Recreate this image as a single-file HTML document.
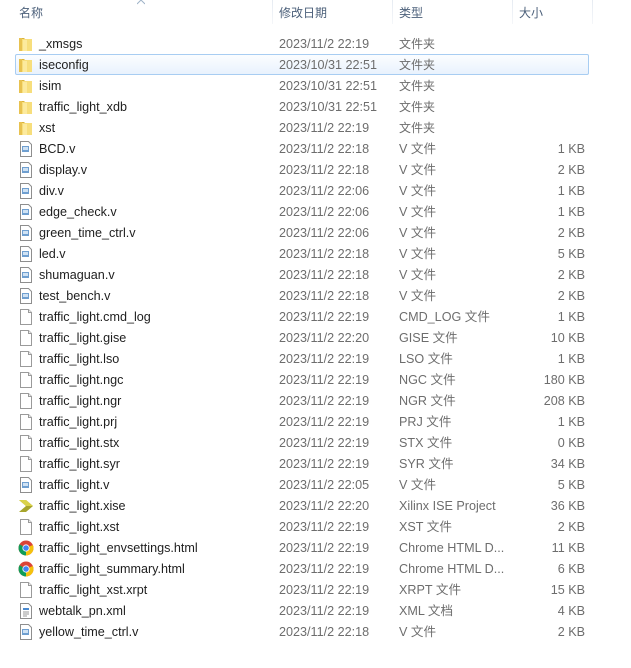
<!DOCTYPE html>
<html><head><meta charset="utf-8"><style>
*{margin:0;padding:0;box-sizing:border-box}
body{width:631px;height:668px;background:#fff;font-family:"Liberation Sans","Noto Sans CJK SC",sans-serif;font-size:12.6px;position:relative;overflow:hidden}
.hd{position:absolute;top:0;left:0;width:631px;height:25px;background:#fff}
.hd span{position:absolute;top:6px;line-height:14px;color:#4c607a;font-size:12px}
.sep{position:absolute;top:0;width:1px;height:24px;background:linear-gradient(#e6ebf2,#f4f6f9)}
.row{position:absolute;left:0;width:631px;height:21px}
.row span{line-height:15px;height:15px;top:4px;position:absolute;white-space:nowrap}
.row .n{left:39px;color:#1e1e1e}
.row .d{left:279px;color:#6d6d6d}
.row .t{left:399px;color:#6d6d6d}
.row .s{right:46px;color:#6d6d6d}
.c{font-size:12px}
.row svg{position:absolute;left:18px;top:3px}
.sel{position:absolute;left:15px;top:54px;width:574px;height:21px;border:1px solid #a8cdf2;border-radius:2px;background:linear-gradient(#fbfdff,#e9f2fd)}
</style></head><body>
<svg width="0" height="0" style="position:absolute">
<defs>
<symbol id="fo" viewBox="0 0 16 16"><path d="M1 2h5l1 1h7v12H1z" fill="#d9b23c"/><path d="M3 3h11v12H3z" fill="#f7de7c"/><path d="M1 2h3v13H1z" fill="#e8c250"/><path d="M5 4h4v11H5z" fill="#fff2b5" opacity=".6"/></symbol>
<symbol id="vf" viewBox="0 0 16 16"><path d="M2.5 .5h8l3 3v12h-11z" fill="#fff" stroke="#8e8e8e"/><rect x="4" y="5" width="7" height="6" fill="#6f9fd0"/><rect x="5" y="6" width="5" height="3" fill="#cfe2f4"/></symbol>
<symbol id="bf" viewBox="0 0 16 16"><path d="M2.5 .5h8l3 3v12h-11z" fill="#fff" stroke="#9a9a9a"/><path d="M10.5 .5v3h3" fill="#eee" stroke="#9a9a9a"/></symbol>
<symbol id="xf" viewBox="0 0 16 16"><path d="M2.5 .5h8l3 3v12h-11z" fill="#fff" stroke="#8e8e8e"/><rect x="5" y="5" width="6" height="2" fill="#4b8ad0"/><path d="M5 9h6M5 11h6M5 13h4" stroke="#999"/></symbol>
<symbol id="xi" viewBox="0 0 16 16"><path d="M1 2h7l7 6-7 6H1l7-6z" fill="#a7a52c"/><path d="M1 2h7l7 6H8z" fill="#dad24a"/></symbol>
<symbol id="ch" viewBox="0 0 16 16"><circle cx="8" cy="8" r="7.5" fill="#db4437"/><path d="M8 8L1.5 4.3A7.5 7.5 0 0 0 8 15.5z" fill="#0f9d58"/><path d="M8 8v7.5A7.5 7.5 0 0 0 14.9 5z" fill="#f4c20d"/><circle cx="8" cy="8" r="3.6" fill="#fff"/><circle cx="8" cy="8" r="2.8" fill="#4285f4"/></symbol>
</defs></svg>
<div class="hd">
<span style="left:19px">名称</span><span style="left:279px">修改日期</span><span style="left:399px">类型</span><span style="left:519px">大小</span>
<svg style="position:absolute;left:137px;top:0" width="8" height="5"><path d="M0 4L4 0L8 4" fill="none" stroke="#9fb3c8"/></svg>
<div class="sep" style="left:272px"></div><div class="sep" style="left:392px"></div><div class="sep" style="left:512px"></div><div class="sep" style="left:592px"></div>
</div>
<div class="sel"></div>
<div class="row" style="top:33px"><svg width="16" height="16"><use href="#fo"/></svg><span class="n">_xmsgs</span><span class="d">2023/11/2 22:19</span><span class="t c">文件夹</span></div>
<div class="row" style="top:54px"><svg width="16" height="16"><use href="#fo"/></svg><span class="n">iseconfig</span><span class="d">2023/10/31 22:51</span><span class="t c">文件夹</span></div>
<div class="row" style="top:75px"><svg width="16" height="16"><use href="#fo"/></svg><span class="n">isim</span><span class="d">2023/10/31 22:51</span><span class="t c">文件夹</span></div>
<div class="row" style="top:96px"><svg width="16" height="16"><use href="#fo"/></svg><span class="n">traffic_light_xdb</span><span class="d">2023/10/31 22:51</span><span class="t c">文件夹</span></div>
<div class="row" style="top:117px"><svg width="16" height="16"><use href="#fo"/></svg><span class="n">xst</span><span class="d">2023/11/2 22:19</span><span class="t c">文件夹</span></div>
<div class="row" style="top:138px"><svg width="16" height="16"><use href="#vf"/></svg><span class="n">BCD.v</span><span class="d">2023/11/2 22:18</span><span class="t">V 文件</span><span class="s">1 KB</span></div>
<div class="row" style="top:159px"><svg width="16" height="16"><use href="#vf"/></svg><span class="n">display.v</span><span class="d">2023/11/2 22:18</span><span class="t">V 文件</span><span class="s">2 KB</span></div>
<div class="row" style="top:180px"><svg width="16" height="16"><use href="#vf"/></svg><span class="n">div.v</span><span class="d">2023/11/2 22:06</span><span class="t">V 文件</span><span class="s">1 KB</span></div>
<div class="row" style="top:201px"><svg width="16" height="16"><use href="#vf"/></svg><span class="n">edge_check.v</span><span class="d">2023/11/2 22:06</span><span class="t">V 文件</span><span class="s">1 KB</span></div>
<div class="row" style="top:222px"><svg width="16" height="16"><use href="#vf"/></svg><span class="n">green_time_ctrl.v</span><span class="d">2023/11/2 22:06</span><span class="t">V 文件</span><span class="s">2 KB</span></div>
<div class="row" style="top:243px"><svg width="16" height="16"><use href="#vf"/></svg><span class="n">led.v</span><span class="d">2023/11/2 22:18</span><span class="t">V 文件</span><span class="s">5 KB</span></div>
<div class="row" style="top:264px"><svg width="16" height="16"><use href="#vf"/></svg><span class="n">shumaguan.v</span><span class="d">2023/11/2 22:18</span><span class="t">V 文件</span><span class="s">2 KB</span></div>
<div class="row" style="top:285px"><svg width="16" height="16"><use href="#vf"/></svg><span class="n">test_bench.v</span><span class="d">2023/11/2 22:18</span><span class="t">V 文件</span><span class="s">2 KB</span></div>
<div class="row" style="top:306px"><svg width="16" height="16"><use href="#bf"/></svg><span class="n">traffic_light.cmd_log</span><span class="d">2023/11/2 22:19</span><span class="t">CMD_LOG 文件</span><span class="s">1 KB</span></div>
<div class="row" style="top:327px"><svg width="16" height="16"><use href="#bf"/></svg><span class="n">traffic_light.gise</span><span class="d">2023/11/2 22:20</span><span class="t">GISE 文件</span><span class="s">10 KB</span></div>
<div class="row" style="top:348px"><svg width="16" height="16"><use href="#bf"/></svg><span class="n">traffic_light.lso</span><span class="d">2023/11/2 22:19</span><span class="t">LSO 文件</span><span class="s">1 KB</span></div>
<div class="row" style="top:369px"><svg width="16" height="16"><use href="#bf"/></svg><span class="n">traffic_light.ngc</span><span class="d">2023/11/2 22:19</span><span class="t">NGC 文件</span><span class="s">180 KB</span></div>
<div class="row" style="top:390px"><svg width="16" height="16"><use href="#bf"/></svg><span class="n">traffic_light.ngr</span><span class="d">2023/11/2 22:19</span><span class="t">NGR 文件</span><span class="s">208 KB</span></div>
<div class="row" style="top:411px"><svg width="16" height="16"><use href="#bf"/></svg><span class="n">traffic_light.prj</span><span class="d">2023/11/2 22:19</span><span class="t">PRJ 文件</span><span class="s">1 KB</span></div>
<div class="row" style="top:432px"><svg width="16" height="16"><use href="#bf"/></svg><span class="n">traffic_light.stx</span><span class="d">2023/11/2 22:19</span><span class="t">STX 文件</span><span class="s">0 KB</span></div>
<div class="row" style="top:453px"><svg width="16" height="16"><use href="#bf"/></svg><span class="n">traffic_light.syr</span><span class="d">2023/11/2 22:19</span><span class="t">SYR 文件</span><span class="s">34 KB</span></div>
<div class="row" style="top:474px"><svg width="16" height="16"><use href="#vf"/></svg><span class="n">traffic_light.v</span><span class="d">2023/11/2 22:05</span><span class="t">V 文件</span><span class="s">5 KB</span></div>
<div class="row" style="top:495px"><svg width="16" height="16"><use href="#xi"/></svg><span class="n">traffic_light.xise</span><span class="d">2023/11/2 22:20</span><span class="t">Xilinx ISE Project</span><span class="s">36 KB</span></div>
<div class="row" style="top:516px"><svg width="16" height="16"><use href="#bf"/></svg><span class="n">traffic_light.xst</span><span class="d">2023/11/2 22:19</span><span class="t">XST 文件</span><span class="s">2 KB</span></div>
<div class="row" style="top:537px"><svg width="16" height="16"><use href="#ch"/></svg><span class="n">traffic_light_envsettings.html</span><span class="d">2023/11/2 22:19</span><span class="t">Chrome HTML D...</span><span class="s">11 KB</span></div>
<div class="row" style="top:558px"><svg width="16" height="16"><use href="#ch"/></svg><span class="n">traffic_light_summary.html</span><span class="d">2023/11/2 22:19</span><span class="t">Chrome HTML D...</span><span class="s">6 KB</span></div>
<div class="row" style="top:579px"><svg width="16" height="16"><use href="#bf"/></svg><span class="n">traffic_light_xst.xrpt</span><span class="d">2023/11/2 22:19</span><span class="t">XRPT 文件</span><span class="s">15 KB</span></div>
<div class="row" style="top:600px"><svg width="16" height="16"><use href="#xf"/></svg><span class="n">webtalk_pn.xml</span><span class="d">2023/11/2 22:19</span><span class="t">XML 文档</span><span class="s">4 KB</span></div>
<div class="row" style="top:621px"><svg width="16" height="16"><use href="#vf"/></svg><span class="n">yellow_time_ctrl.v</span><span class="d">2023/11/2 22:18</span><span class="t">V 文件</span><span class="s">2 KB</span></div>
</body></html>
